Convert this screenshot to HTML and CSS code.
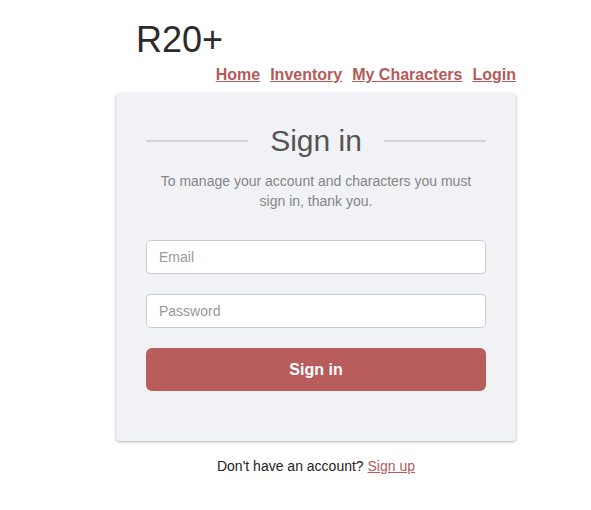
FILE: index.html
```html
<!DOCTYPE html>
<html>
<head>
<meta charset="utf-8">
<link rel="stylesheet" href="styles.css">
</head>
<body>
<div class="page">
  <header class="header">
    <div class="brand">R20+</div>
    <nav class="nav">
      <a href="#">Home</a>
      <a href="#">Inventory</a>
      <a href="#">My Characters</a>
      <a href="#">Login</a>
    </nav>
  </header>
  <main class="card">
    <div class="title-row">
      <span class="rule"></span>
      <h1 class="title">Sign in</h1>
      <span class="rule"></span>
    </div>
    <p class="intro">To manage your account and characters you must sign in, thank you.</p>
    <form class="form">
      <input class="field" type="email" placeholder="Email">
      <input class="field" type="password" placeholder="Password">
      <button class="btn" type="button">Sign in</button>
    </form>
  </main>
  <p class="footer">Don't have an account? <a href="#">Sign up</a></p>
</div>
</body>
</html>
```

FILE: styles.css
```css
html, body {
  margin: 0;
  padding: 0;
  background: #ffffff;
  font-family: "Liberation Sans", Arial, sans-serif;
}

.page {
  width: 400px;
  margin-left: 116px;
  padding-top: 20px;
}

.header {
  display: flex;
  flex-direction: column;
}

.brand {
  font-size: 36px;
  line-height: 40px;
  color: #2b2b2b;
  margin-left: 20px;
}

.nav {
  display: flex;
  justify-content: flex-end;
  gap: 10px;
  margin-top: 3px;
}

.nav a {
  font-size: 16px;
  font-weight: bold;
  line-height: 24px;
  color: #b55a5a;
  text-decoration: underline;
}

.card {
  margin-top: 6px;
  background: #f1f2f6;
  border-radius: 4px;
  box-shadow: 0 1px 3px rgba(0, 0, 0, 0.3);
  padding: 27px 30px 50px;
}

.title-row {
  display: flex;
  align-items: center;
  gap: 22px;
}

.rule {
  flex: 1;
  height: 2px;
  background: #d3d4d8;
}

.title {
  margin: 0;
  font-size: 30px;
  font-weight: normal;
  line-height: 42px;
  color: #555555;
}

.intro {
  margin: 9px 6px 0;
  text-align: center;
  font-size: 14px;
  line-height: 20px;
  color: #858585;
}

.form {
  display: flex;
  flex-direction: column;
  margin-top: 29px;
}

.field {
  box-sizing: border-box;
  height: 34px;
  margin: 0 0 20px;
  padding: 0 12px;
  border: 1px solid #cccccc;
  border-radius: 4px;
  background: #ffffff;
  font-family: "Liberation Sans", Arial, sans-serif;
  font-size: 14px;
  color: #333;
}

.field::placeholder {
  color: #999999;
}

.btn {
  height: 43px;
  border: none;
  border-radius: 6px;
  background: #b95c5c;
  color: #ffffff;
  font-family: "Liberation Sans", Arial, sans-serif;
  font-size: 16px;
  font-weight: bold;
}

.footer {
  margin: 16px 0 0;
  text-align: center;
  font-size: 14px;
  line-height: 18px;
  color: #222222;
}

.footer a {
  color: #b55a5a;
  text-decoration: underline;
}
```
